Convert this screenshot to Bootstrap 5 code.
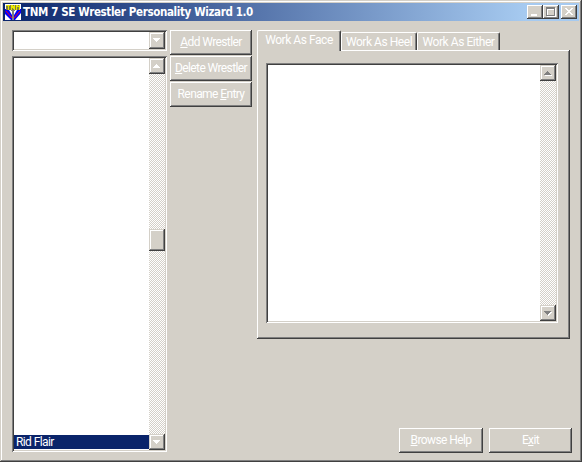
<!DOCTYPE html>
<html lang="en">
<head>
<meta charset="utf-8">
<title>TNM 7 SE Wrestler Personality Wizard 1.0</title>
<link href="https://cdn.jsdelivr.net/npm/bootstrap@5.3.0/dist/css/bootstrap.min.css" rel="stylesheet">
<style>
:root{--face:#d4d0c8;--shade:#808080;--dark:#404040}
body{background:var(--face);font:12px/14px Roboto,"Liberation Sans",Arial,sans-serif;color:#fff}
.window{width:582px;height:462px;padding:3px;box-shadow:inset -1px -1px var(--dark),inset 1px 1px var(--face),inset -2px -2px var(--shade),inset 2px 2px #fff}
.titlebar{height:18px;padding:0 2px 0 2px;background:linear-gradient(90deg,#0a246a,#a6caf0 522px)}
.caption{font:bold 11.5px/18px "DejaVu Sans Condensed","DejaVu Sans",sans-serif;letter-spacing:-.36px;padding-left:2px;white-space:nowrap}
.btn.raised,.raised{border:0;border-radius:0;padding:0;background:var(--face);color:#fff;font-size:12px;line-height:14px;white-space:nowrap;box-shadow:inset -1px -1px var(--dark),inset 1px 1px #fff,inset -2px -2px var(--shade)}
.raised.soft{box-shadow:inset -1px -1px var(--dark),inset 1px 1px var(--face),inset -2px -2px var(--shade),inset 2px 2px #fff}
.winbtn{width:16px;height:14px}
.winbtn.close-gap{margin-left:2px}
.client{padding:9px 9px 0 9px}
.leftcol{width:155px;margin-right:3px}
.sunken{background:#fff;padding:2px;box-shadow:inset 1px 1px var(--shade),inset -1px -1px #fff,inset 2px 2px var(--dark),inset -2px -2px var(--face)}
.combo{height:21px;margin-bottom:5px}
.combo .raised{width:16px;height:17px}
.wrestlers{height:396px}
.entry{height:14px;background:#0a246a;padding-left:2px;margin-bottom:1px;white-space:nowrap}
.scroller{width:16px;background:repeating-conic-gradient(#fff 0 25%,var(--face) 0 50%) 0 0/2px 2px}
.scroller .raised{height:16px;width:16px}
.scroller .thumb{height:22px;margin-top:155px}
.actions{width:82px;gap:1px;margin-right:5px}
.actions .btn{height:25px;padding-bottom:1px}
.tabset{width:313px}
.tabs{height:20px}
.tab{height:18px;border-top:1px solid #fff;border-left:1px solid #fff;border-right:1px solid var(--dark);box-shadow:inset -1px 0 var(--shade);border-top-left-radius:2px;border-top-right-radius:2px;text-align:center;line-height:18px;white-space:nowrap}
.tab.current{width:84px;height:21px;background:var(--face);position:relative;z-index:1;line-height:19px}
.tab.heel{width:76px}.tab.either{width:83px}
.pane{height:289px;padding:13px 12px 16px 9px;box-shadow:inset -1px -1px var(--dark),inset 1px 1px #fff,inset -2px -2px var(--shade)}
.footer-row{gap:6px;margin-right:-2px;margin-bottom:-1px}
.footer-row .btn{height:25px;width:84px;padding-bottom:1px}
.footer-row .btn.exit{width:83px}
.t{display:inline-block}
.client .t{letter-spacing:-.6px}
.client .tab .t{letter-spacing:-.45px}
u{text-underline-offset:1px;text-decoration-thickness:1px}
svg{display:block}
</style>
</head>
<body class="m-0 overflow-hidden">
<div class="window">
  <div class="titlebar d-flex align-items-center">
    <svg width="16" height="16" viewBox="0 0 16 16"><path fill="#fff" d="M0 0h16v16H0z"/><path fill="#00f" d="M0 5h16v4l-6 7H6L0 10z"/><path fill="none" stroke="#f00020" d="M1 7l6 7M15 7l-6 7"/><path fill="#fff" d="M4 6h8l-3 5H7z"/><path fill="#808080" d="M6 5h4v2H9v9H7V7H6z"/><path fill="#808040" d="M1 1h14v5H1z"/><path fill="#e8e800" shape-rendering="crispEdges" d="M1 1h4v1H4v4H3V2H1zM6 1h1l2 2V1h1v5H9L7 3v3H6zM11 1h1l1 1 1-1h1v5h-1V3h-2v3h-1z"/></svg>
    <div class="caption flex-grow-1"><span class="t">TNM 7 SE Wrestler Personality Wizard 1.0</span></div>
    <div class="raised winbtn"><svg width="16" height="14"><path fill="#fff" d="M4 9h6v2H4z"/></svg></div>
    <div class="raised winbtn"><svg width="16" height="14" shape-rendering="crispEdges"><path fill="#fff" fill-rule="evenodd" d="M4 3h9v9H4zM5 5v6h7V5z"/><path fill="#808080" fill-rule="evenodd" d="M3 2h9v9H3zM4 4v6h7V4z"/></svg></div>
    <div class="raised winbtn close-gap"><svg width="16" height="14" shape-rendering="crispEdges"><path fill="#fff" d="M4 3h2v1h1v1h2V4h1V3h2v1h-1v1h-1v1H9v1h1v1h1v1h1v1h-2V9H9V8H7v1H6v1H4V9h1V8h1V7h1V6H6V5H5V4H4z"/></svg></div>
  </div>
  <div class="client">
    <div class="d-flex">
      <div class="leftcol">
        <div class="combo sunken d-flex justify-content-end"><div class="raised soft"><svg width="16" height="17" shape-rendering="crispEdges"><path fill="#fff" d="M4 6h7v1h-1v1H9v1H8v1H7V9H6V8H5V7H4z"/></svg></div></div>
        <div class="wrestlers sunken d-flex">
          <div class="flex-grow-1 d-flex flex-column justify-content-end"><div class="entry"><span class="t">Rid Flair</span></div></div>
          <div class="scroller d-flex flex-column">
            <div class="raised soft"><svg width="16" height="16" shape-rendering="crispEdges"><path fill="#fff" d="M7 6h1v1h1v1h1v1h1v1H4V9h1V8h1V7h1z"/></svg></div>
            <div class="raised soft thumb"></div>
            <div class="raised soft mt-auto"><svg width="16" height="16" shape-rendering="crispEdges"><path fill="#fff" d="M4 6h7v1h-1v1H9v1H8v1H7V9H6V8H5V7H4z"/></svg></div>
          </div>
        </div>
      </div>
      <div class="actions d-flex flex-column align-self-start">
        <button class="btn raised"><span class="t"><u>A</u>dd Wrestler</span></button>
        <button class="btn raised"><span class="t"><u>D</u>elete Wrestler</span></button>
        <button class="btn raised"><span class="t">Rename <u>E</u>ntry</span></button>
      </div>
      <div class="d-flex flex-column">
        <div class="tabset">
          <div class="tabs d-flex align-items-end">
            <div class="tab current align-self-start"><span class="t">Work As Face</span></div>
            <div class="tab heel"><span class="t">Work As Heel</span></div>
            <div class="tab either"><span class="t">Work As Either</span></div>
          </div>
          <div class="pane">
            <div class="sunken h-100 d-flex justify-content-end">
              <div class="scroller d-flex flex-column justify-content-between">
                <div class="raised soft"><svg width="16" height="16" shape-rendering="crispEdges"><path fill="#fff" d="M5 10h7v1H5z"/><path fill="#808080" d="M7 6h1v1h1v1h1v1h1v1H4V9h1V8h1V7h1z"/></svg></div>
                <div class="raised soft"><svg width="16" height="16" shape-rendering="crispEdges"><path fill="#fff" d="M5 7h7v1h-1v1h-1v1H9v1H8v-1H7V9H6V8H5z"/><path fill="#808080" d="M4 6h7v1h-1v1H9v1H8v1H7V9H6V8H5V7H4z"/></svg></div>
              </div>
            </div>
          </div>
        </div>
        <div class="footer-row d-flex justify-content-end mt-auto">
          <button class="btn raised"><span class="t"><u>B</u>rowse Help</span></button>
          <button class="btn raised exit"><span class="t">E<u>x</u>it</span></button>
        </div>
      </div>
    </div>
  </div>
</div>
<script src="https://cdn.jsdelivr.net/npm/bootstrap@5.3.0/dist/js/bootstrap.bundle.min.js"></script>
</body>
</html>
